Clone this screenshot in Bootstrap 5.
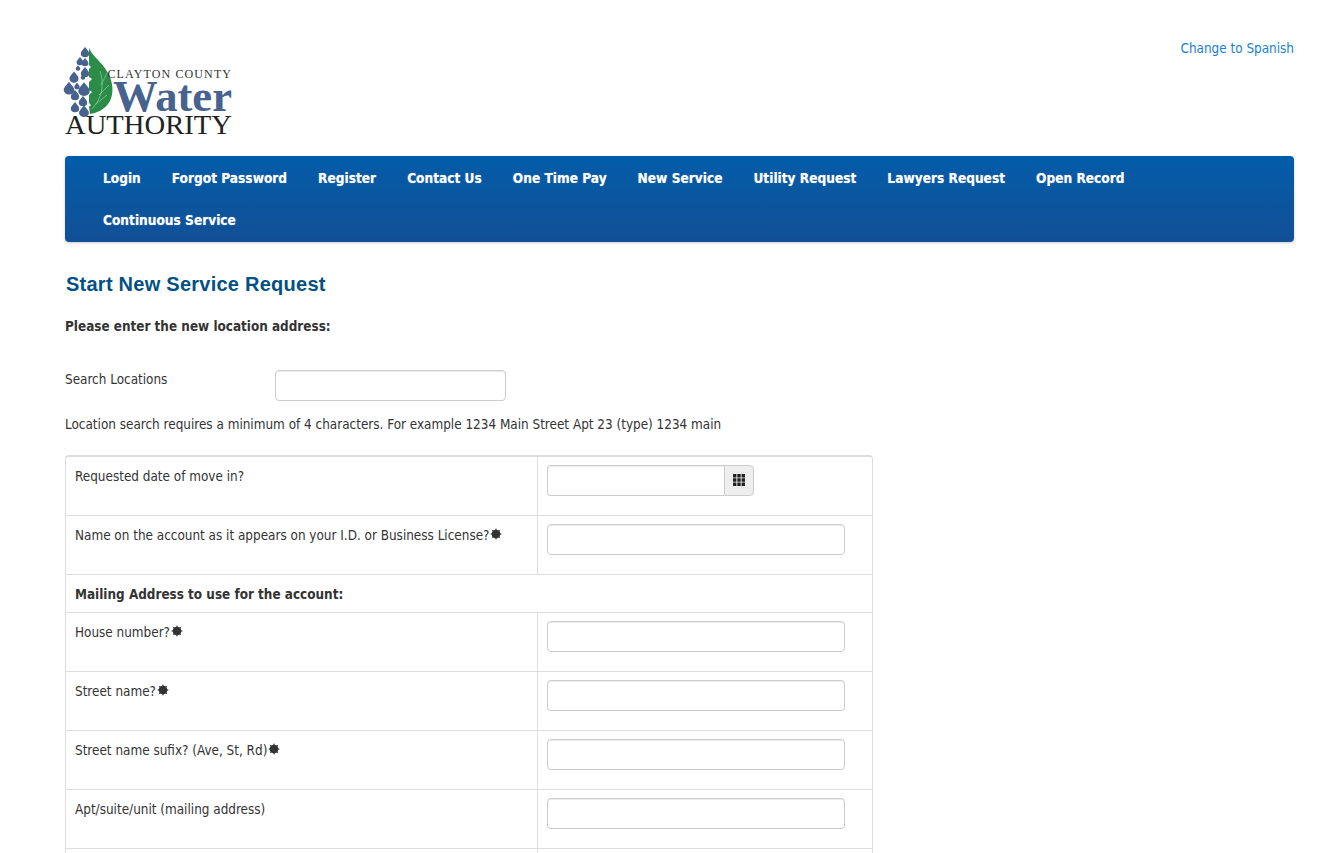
<!DOCTYPE html>
<html lang="en"><head><meta charset="utf-8"><title>Start New Service Request</title>
<link rel="stylesheet" href="https://cdn.jsdelivr.net/npm/bootstrap@5.3.0/dist/css/bootstrap.min.css">
<style>
body{font-family:"DejaVu Sans Condensed","DejaVu Sans","Liberation Sans",sans-serif;font-stretch:condensed;font-size:13.4px;line-height:20px;color:#333;background:#fff;overflow:hidden;height:853px}
.page-wrap{padding:38px 48px 0 65px}
.top-row{height:118px}
.lang-link{color:#1a80d2;text-decoration:none;line-height:20px;margin-top:1px}
.logo-svg{display:block;margin-top:9px;overflow:visible}
.main-nav{background:linear-gradient(#035ca9,#125096);border-radius:4px;box-shadow:0 1px 3px rgba(0,0,0,.2);padding:1px 22.5px;min-height:86px}
.main-nav a{display:block;color:#fff;font-weight:700;font-size:13.58px;line-height:20px;padding:11px 15.5px;text-decoration:none;text-shadow:0 0 1px rgba(255,255,255,.5)}
.page-title{font-family:"Liberation Sans",Arial,sans-serif;font-weight:700;font-size:20px;line-height:24px;letter-spacing:.25px;color:#035085;margin:30px 0 0 1px}
.sub-title{font-weight:700;margin:19px 0 0;line-height:24px}
.search-row{margin-top:31px;height:31px}
.search-label{width:210px;line-height:18px;padding-top:1px}
.field{height:31px;border:1px solid #ccc;border-radius:4px;background:#fff;box-shadow:inset 0 1px 1px rgba(0,0,0,.075);display:block;padding:4px 8px}
.field-search{width:231px}
.field-wide{width:298px}
.hint{margin:14px 0 0;line-height:20px}
.form-table{width:808px;margin-top:20px;border-collapse:separate;border-spacing:0;border:1px solid #ddd;border-top-width:2px;border-radius:4px;table-layout:fixed}
.form-table td{border-top:1px solid #ddd;padding:10px 9px 0;vertical-align:top;line-height:20px;height:59px}
.form-table td+td{padding-top:8px}
.form-table tr:first-child td{border-top:0;height:58px}
.form-table td+td{border-left:1px solid #ddd}
.form-table td.head-cell{font-weight:700;height:38px;padding-top:10px}
.date-group{display:flex;width:207px}
.date-group .field{width:178px;border-radius:4px 0 0 4px;border-right:0}
.date-addon{width:30px;height:31px;background:#eee;border:1px solid #ccc;border-radius:0 4px 4px 0;display:flex;align-items:center;justify-content:center;padding-bottom:2px}
.star{display:inline-block;vertical-align:0;margin-left:1px}
</style></head>
<body>
<div class="page-wrap">
 <div class="top-row d-flex justify-content-between align-items-start">
  <svg class="logo-svg" width="168" height="90" viewBox="0 0 168 90" role="img" aria-label="Clayton County Water Authority">
   <defs><path id="dp" d="M0-4.500C2.200-1.700 3.800-.2 3.800 1.300a3.800 3.400 0 0 1-7.600 0C-3.800-.2-2.200-1.700 0-4.500z"/></defs>
   <path d="M24 1C28 10 37 15 43 26 48 35 49 46 45 54 41 62 32 66 25 67L24 60 26 58 24 56 24 48 27 45 24 43 24 35 27 32 24 30 24 22 26 20 24 18Z" fill="#2a8c46"/>
   <path d="M27 62C36 52 40 40 35 24M31 57L42 48M34 48L44 38M36 38L42 26" stroke="#8fcf9f" stroke-width=".7" fill="none"/>
   <g fill="#47628f">
    <use href="#dp" transform="translate(20 5) scale(1.100)"/>
    <use href="#dp" transform="translate(15 14) scale(.9)"/>
    <use href="#dp" transform="translate(20 15) scale(.9)"/>
    <use href="#dp" transform="translate(13 21) scale(.6)"/>
    <use href="#dp" transform="translate(20 25) scale(1.100)"/>
    <use href="#dp" transform="translate(9 30) scale(1.200)"/>
    <use href="#dp" transform="translate(18 30) scale(.6)"/>
    <use href="#dp" transform="translate(4 41) scale(1.400)"/>
    <use href="#dp" transform="translate(12 39) scale(.7)"/>
    <use href="#dp" transform="translate(19 42) scale(1.500)"/>
    <use href="#dp" transform="translate(10 48) scale(1.100)"/>
    <use href="#dp" transform="translate(18 54) scale(1.100)"/>
    <use href="#dp" transform="translate(10 60) scale(1.100)"/>
    <use href="#dp" transform="translate(19 64) scale(1.300)"/>
   </g>
   <text x="42.500" y="30.500" font-family="Liberation Serif,serif" font-size="12" fill="#333" textLength="123.500" lengthAdjust="spacing">CLAYTON COUNTY</text>
   <text x="48" y="64" font-family="Liberation Serif,serif" font-weight="700" font-size="44" fill="#47628f" textLength="119" lengthAdjust="spacingAndGlyphs">Water</text>
   <text x="0" y="87" font-family="Liberation Serif,serif" font-size="27" fill="#222" textLength="167" lengthAdjust="spacingAndGlyphs">AUTHORITY</text>
  </svg>
  <a class="lang-link" href="#">Change to Spanish</a>
 </div>
 <nav class="main-nav d-flex flex-wrap align-content-start">
  <a href="#">Login</a><a href="#">Forgot Password</a><a href="#">Register</a><a href="#">Contact Us</a><a href="#">One Time Pay</a><a href="#">New Service</a><a href="#">Utility Request</a><a href="#">Lawyers Request</a><a href="#">Open Record</a><a href="#" class="w-100">Continuous Service</a>
 </nav>
 <h1 class="page-title">Start New Service Request</h1>
 <p class="sub-title">Please enter the new location address:</p>
 <div class="search-row d-flex"><label class="search-label" for="s">Search Locations</label><input id="s" class="field field-search" type="text"></div>
 <p class="hint">Location search requires a minimum of 4 characters. For example 1234 Main Street Apt 23 (type) 1234 main</p>
 <table class="form-table">
  <colgroup><col style="width:471px"><col></colgroup>
  <tr><td>Requested date of move in?</td><td><div class="date-group"><input class="field" type="text" aria-label="Requested date"><span class="date-addon"><svg width="12" height="12" viewBox="0 0 12 12" fill="#222"><path d="M0 0h3.400v3.400H0zM4.300 0h3.400v3.400H4.300zM8.600 0H12v3.400H8.600zM0 4.300h3.400v3.400H0zM4.300 4.300h3.400v3.400H4.300zM8.600 4.300H12v3.400H8.600zM0 8.600h3.400V12H0zM4.300 8.600h3.400V12H4.300zM8.600 8.600H12V12H8.600z"/></svg></span></div></td></tr>
  <tr><td>Name on the account as it appears on your I.D. or Business License?<svg class="star" width="12" height="12" viewBox="0 0 12 12"><use href="#st"/></svg></td><td><input class="field field-wide" type="text"></td></tr>
  <tr><td colspan="2" class="head-cell">Mailing Address to use for the account:</td></tr>
  <tr><td>House number?<svg class="star" width="12" height="12" viewBox="0 0 12 12"><use href="#st"/></svg></td><td><input class="field field-wide" type="text"></td></tr>
  <tr><td>Street name?<svg class="star" width="12" height="12" viewBox="0 0 12 12"><use href="#st"/></svg></td><td><input class="field field-wide" type="text"></td></tr>
  <tr><td>Street name sufix? (Ave, St, Rd)<svg class="star" width="12" height="12" viewBox="0 0 12 12"><use href="#st"/></svg></td><td><input class="field field-wide" type="text"></td></tr>
  <tr><td>Apt/suite/unit (mailing address)</td><td><input class="field field-wide" type="text"></td></tr>
  <tr><td>&nbsp;</td><td><input class="field field-wide" type="text"></td></tr>
 </table>
</div>
<svg width="0" height="0" class="position-absolute"><defs><g id="st" fill="#333"><circle cx="6" cy="6" r="4.300"/><path d="M6 0l1.200 3H4.800zM6 12l1.200-3H4.800zM0 6l3-1.200v2.400zM12 6l-3-1.200v2.400zM1.800 1.800l3 1.200-1.800 1.800zM10.200 1.800l-3 1.200 1.800 1.800zM1.800 10.200l3-1.200-1.800-1.800zM10.200 10.200l-3-1.200 1.800-1.800z"/></g></defs></svg>
<script src="https://cdn.jsdelivr.net/npm/bootstrap@5.3.0/dist/js/bootstrap.bundle.min.js"></script>
</body></html>
